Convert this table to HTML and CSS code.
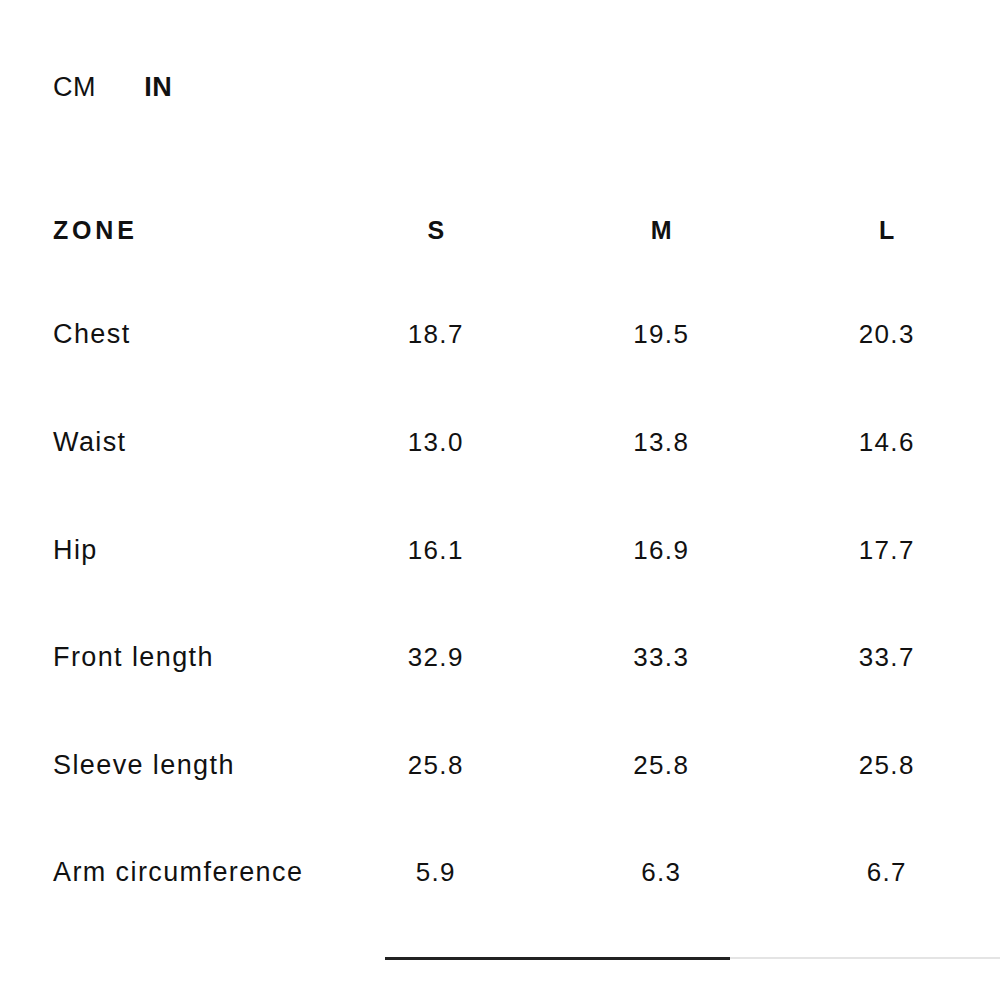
FILE: index.html
```html
<!DOCTYPE html>
<html lang="en">
<head>
<meta charset="utf-8">
<title>Size guide</title>
<link rel="stylesheet" href="styles.css">
</head>
<body>
<div class="page">
  <div class="units">
    <span class="unit">CM</span>
    <span class="unit active">IN</span>
  </div>
  <div class="table">
    <div class="row head">
      <div class="label">ZONE</div>
      <div class="val">S</div>
      <div class="val">M</div>
      <div class="val">L</div>
    </div>
    <div class="row">
      <div class="label">Chest</div>
      <div class="val">18.7</div>
      <div class="val">19.5</div>
      <div class="val">20.3</div>
    </div>
    <div class="row">
      <div class="label">Waist</div>
      <div class="val">13.0</div>
      <div class="val">13.8</div>
      <div class="val">14.6</div>
    </div>
    <div class="row">
      <div class="label">Hip</div>
      <div class="val">16.1</div>
      <div class="val">16.9</div>
      <div class="val">17.7</div>
    </div>
    <div class="row">
      <div class="label">Front length</div>
      <div class="val">32.9</div>
      <div class="val">33.3</div>
      <div class="val">33.7</div>
    </div>
    <div class="row">
      <div class="label">Sleeve length</div>
      <div class="val">25.8</div>
      <div class="val">25.8</div>
      <div class="val">25.8</div>
    </div>
    <div class="row">
      <div class="label">Arm circumference</div>
      <div class="val">5.9</div>
      <div class="val">6.3</div>
      <div class="val">6.7</div>
    </div>
  </div>
  <div class="scroll">
    <div class="thumb"></div>
    <div class="track"></div>
  </div>
</div>
</body>
</html>
```

FILE: styles.css
```css
html, body {
  margin: 0;
  padding: 0;
  background: #fff;
}
body {
  font-family: "Liberation Sans", Arial, sans-serif;
  color: #111;
  overflow: hidden;
}
.page {
  box-sizing: border-box;
  width: 1000px;
  height: 1000px;
  padding-top: 67px;
  overflow: hidden;
}
.units {
  display: flex;
  gap: 48px;
  margin-left: 53px;
  height: 40px;
  align-items: center;
  font-size: 27px;
  letter-spacing: 0.6px;
}
.unit.active {
  font-weight: 700;
}
.table {
  margin-top: 103px;
  padding-left: 53px;
}
.row {
  display: grid;
  grid-template-columns: 270px repeat(3, 225.5px);
  align-items: center;
  height: 107.6px;
  font-size: 26px;
  letter-spacing: 1.3px;
}
.row .label {
  font-size: 27px;
  letter-spacing: 1.4px;
}
.row.head {
  height: 40px;
  margin-bottom: 31.2px;
  font-weight: 700;
  font-size: 25px;
  letter-spacing: 0;
}
.row.head .label {
  font-size: 25px;
  letter-spacing: 3.8px;
}
.val {
  text-align: center;
}
.scroll {
  display: flex;
  align-items: center;
  margin: 30px 0 0 385px;
  height: 3px;
}
.thumb {
  width: 345px;
  height: 3px;
  background: #222;
}
.track {
  flex: 1;
  height: 2px;
  background: #e4e4e4;
}
```
